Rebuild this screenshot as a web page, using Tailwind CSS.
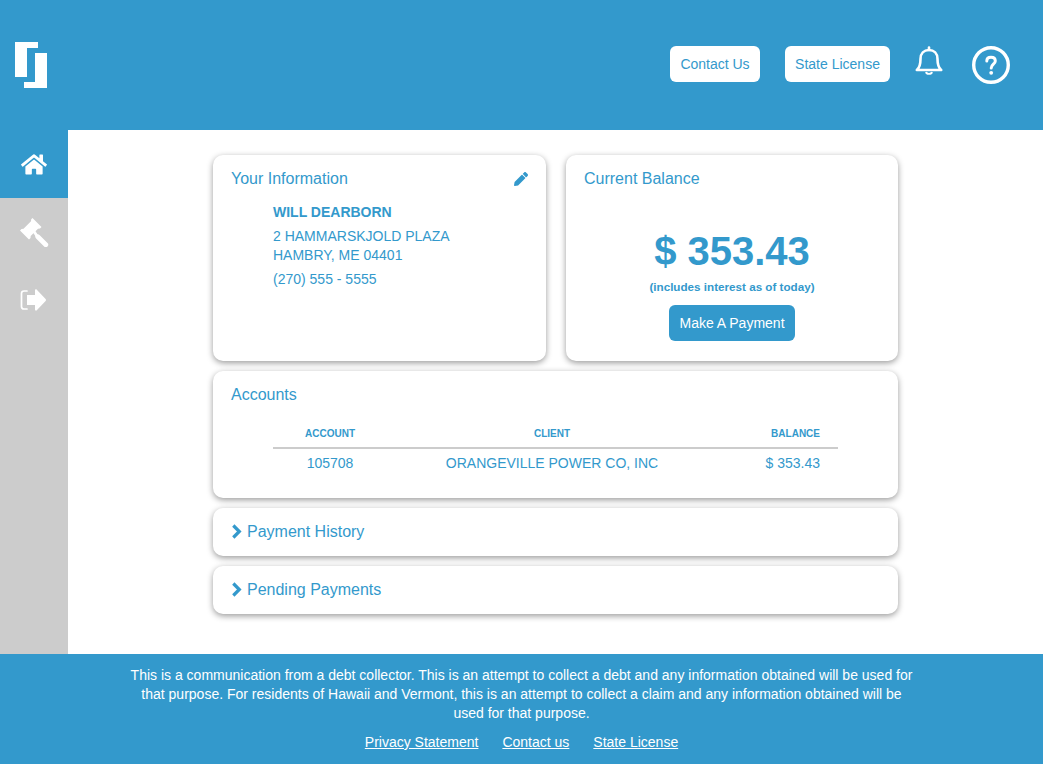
<!DOCTYPE html>
<html lang="en">
<head>
    <meta charset="UTF-8">
    <meta name="viewport" content="width=device-width, initial-scale=1.0">
    <title>Account Overview</title>
    <script src="https://cdn.jsdelivr.net/npm/@tailwindcss/browser@4"></script>
</head>
<body class="bg-white font-['Liberation_Sans',Arial,sans-serif] text-[14px] text-[#3399cc] h-[764px] overflow-hidden flex flex-col">

    <!-- Header -->
    <header class="h-[130px] shrink-0 bg-[#3399cc] flex items-center justify-between pl-[15px] pr-[33px]">
        <svg class="w-[32px] h-[46px]" viewBox="0 0 32 46" fill="#fff">
            <path d="M0 0H23V6H12V35H0Z"></path>
            <path d="M20 11H32V46H9V40H20Z"></path>
        </svg>
        <div class="flex items-center">
            <a class="h-[36px] w-[90px] mb-[2px] bg-white rounded-[6px] flex items-center justify-center">Contact Us</a>
            <a class="h-[36px] w-[105px] mb-[2px] ml-[25px] bg-white rounded-[6px] flex items-center justify-center">State License</a>
            <svg class="w-[28px] h-[30px] ml-[25px] mb-[9px]" viewBox="0 0 28 30" fill="none" stroke="#fff" stroke-width="2.6" stroke-linejoin="round">
                <path d="M1.800 24C5 21.500 5.500 18 5.500 13C5.500 7.500 9 4 14 4C19 4 22.500 7.500 22.500 13C22.500 18 23 21.500 26.200 24Z"></path>
                <path d="M14 1.500V4" stroke-linecap="round"></path>
                <path d="M11 26C11.500 28.500 16.500 28.500 17 26" stroke-width="1.800"></path>
            </svg>
            <svg class="w-[38px] h-[38px] ml-[29px]" viewBox="0 0 38 38" fill="none" stroke="#fff">
                <circle cx="19" cy="19" r="17.300" stroke-width="3.400"></circle>
                <path d="M14.800 15C14.800 12.500 16.600 11.200 19 11.200C21.600 11.200 23.300 12.700 23.300 14.900C23.300 18 19.200 18.300 19.200 22" stroke-width="3" stroke-linecap="round"></path>
                <circle cx="19.200" cy="26.800" r="1.900" fill="#fff" stroke="none"></circle>
            </svg>
        </div>
    </header>

    <div class="flex flex-1 min-h-0">
        <!-- Sidebar -->
        <nav class="w-[68px] shrink-0 bg-[#cccccc] flex flex-col">
            <div class="h-[68px] bg-[#3399cc] flex items-center justify-center">
                <svg class="w-[26px] h-[23px]" viewBox="0 0 576 512" fill="#fff"><path d="M280.37 148.26L96 300.11V464a16 16 0 0 0 16 16l112.06-.29a16 16 0 0 0 15.92-16V368a16 16 0 0 1 16-16h64a16 16 0 0 1 16 16v95.64a16 16 0 0 0 16 16.05L464 480a16 16 0 0 0 16-16V300L295.67 148.26a12.19 12.19 0 0 0-15.3 0zM571.6 251.47L488 182.56V44.05a12 12 0 0 0-12-12h-56a12 12 0 0 0-12 12v72.61L318.47 43a48 48 0 0 0-61 0L4.34 251.47a12 12 0 0 0-1.6 16.9l25.5 31A12 12 0 0 0 45.15 301l235.22-193.74a12.19 12.19 0 0 1 15.3 0L530.9 301a12 12 0 0 0 16.9-1.6l25.5-31a12 12 0 0 0-1.7-16.93z"></path></svg>
            </div>
            <div class="h-[68px] flex items-center justify-center">
                <!-- gavel -->
                <svg class="w-[30px] h-[30px]" viewBox="19 217 30 30" fill="#fff">
                    <path d="M20 230.500L21.500 229L23.500 228.800L31 221.300L31.200 219.300L32.500 218L41.500 227L40 228.500L38 228.700L30.700 236L30.500 238L29 239.500Z"></path>
                    <path d="M37.800 236.800L45.800 244.800" stroke="#fff" stroke-width="4.800" stroke-linecap="round" fill="none"></path>
                    <path d="M33 232.500L35 230.500L38 235L36 237Z"></path>
                </svg>
            </div>
            <div class="h-[68px] flex items-center justify-center">
                <!-- sign out -->
                <svg class="w-[28px] h-[24px]" viewBox="20 288 28 24" fill="#fff">
                    <path d="M27 291H24C22.500 291 21.500 292 21.500 293.500V306.500C21.500 308 22.500 309 24 309H27" fill="none" stroke="#fff" stroke-width="1.700" stroke-linecap="round"></path>
                    <path d="M27 295H35V290.500C35 289.500 36 289 36.800 289.700L45.600 299C46.100 299.600 46.100 300.400 45.600 301L36.800 310.300C36 311 35 310.500 35 309.500V305H27Z"></path>
                </svg>
            </div>
        </nav>

        <!-- Main -->
        <main class="flex-1 pt-[25px] pl-[145px]">
            <div class="w-[685px] flex flex-col gap-[10px]">
                <div class="flex gap-[20px]">
                    <section class="w-[333px] h-[206px] bg-white rounded-[10px] shadow-[0_2px_6px_rgba(0,0,0,0.4)] px-[18px] pt-[15px]">
                        <div class="flex justify-between items-center">
                            <h2 class="text-[16px] leading-[18px]">Your Information</h2>
                            <svg class="w-[14px] h-[14px] mb-[1px]" viewBox="0 0 512 512" fill="#3399cc"><path d="M497.900 142.100l-46.100 46.100c-4.700 4.700-12.300 4.700-17 0l-111-111c-4.700-4.700-4.700-12.300 0-17l46.100-46.100c18.700-18.700 49.100-18.700 67.900 0l60.100 60.100c18.800 18.700 18.800 49.100 0 67.900zM284.200 99.800L21.600 362.400.4 483.900c-2.900 16.400 11.400 30.600 27.800 27.800l121.500-21.300 262.600-262.600c4.200-4.200 4.200-11 0-15.200l-112.900-112.900c-4.300-4.100-11.100-4.100-15.200.1z"></path></svg>
                        </div>
                        <div class="pl-[42px] mt-[15px] leading-[19px]">
                            <p class="font-bold">WILL DEARBORN</p>
                            <p class="mt-[5px]">2 HAMMARSKJOLD PLAZA</p>
                            <p>HAMBRY, ME 04401</p>
                            <p class="mt-[5px]">(270) 555 - 5555</p>
                        </div>
                    </section>
                    <section class="w-[332px] h-[206px] bg-white rounded-[10px] shadow-[0_2px_6px_rgba(0,0,0,0.4)] px-[18px] pt-[15px]">
                        <h2 class="text-[16px] leading-[18px]">Current Balance</h2>
                        <div class="flex flex-col items-center">
                            <p class="mt-[40px] text-[40px] leading-[46px] font-bold">$ 353.43</p>
                            <p class="mt-[6px] text-[11.670px] leading-[14px] font-bold">(includes interest as of today)</p>
                            <button class="mt-[11px] w-[126px] h-[36px] bg-[#3399cc] text-white rounded-[6px]">Make A Payment</button>
                        </div>
                    </section>
                </div>

                <section class="h-[127px] bg-white rounded-[10px] shadow-[0_2px_6px_rgba(0,0,0,0.4)] px-[18px] pt-[15px]">
                    <h2 class="text-[16px] leading-[18px]">Accounts</h2>
                    <table class="ml-[42px] mt-[20px] w-[565px] table-fixed">
                        <thead>
                            <tr class="border-b-2 border-[#cccccc] text-[10px] font-bold">
                                <th class="w-[114px] h-[24px] pb-[4px] text-center">ACCOUNT</th>
                                <th class="pb-[4px] text-center">CLIENT</th>
                                <th class="w-[121px] pb-[4px] pr-[18px] text-right">BALANCE</th>
                            </tr>
                        </thead>
                        <tbody>
                            <tr>
                                <td class="h-[29px] text-center">105708</td>
                                <td class="text-center">ORANGEVILLE POWER CO, INC</td>
                                <td class="pr-[18px] text-right">$ 353.43</td>
                            </tr>
                        </tbody>
                    </table>
                </section>

                <section class="h-[48px] bg-white rounded-[10px] shadow-[0_2px_6px_rgba(0,0,0,0.4)] px-[18px] flex items-center">
                    <svg class="w-[11px] h-[15px] mb-[1px]" viewBox="0 0 11 15" fill="none" stroke="#3399cc" stroke-width="3.200"><path d="M2.300 1.500L8.300 7.500L2.300 13.500"></path></svg>
                    <h2 class="ml-[5px] text-[16px]">Payment History</h2>
                </section>
                <section class="h-[48px] bg-white rounded-[10px] shadow-[0_2px_6px_rgba(0,0,0,0.4)] px-[18px] flex items-center">
                    <svg class="w-[11px] h-[15px] mb-[1px]" viewBox="0 0 11 15" fill="none" stroke="#3399cc" stroke-width="3.200"><path d="M2.300 1.500L8.300 7.500L2.300 13.500"></path></svg>
                    <h2 class="ml-[5px] text-[16px]">Pending Payments</h2>
                </section>
            </div>
        </main>
    </div>

    <!-- Footer -->
    <footer class="h-[110px] shrink-0 bg-[#3399cc] text-white text-center pt-[12px]">
        <p class="w-[790px] mx-auto leading-[19px]">This is a communication from a debt collector. This is an attempt to collect a debt and any information obtained will be used for that purpose. For residents of Hawaii and Vermont, this is an attempt to collect a claim and any information obtained will be used for that purpose.</p>
        <div class="mt-[9px] flex justify-center gap-[24px] leading-[20px]">
            <a class="underline">Privacy Statement</a>
            <a class="underline">Contact us</a>
            <a class="underline">State License</a>
        </div>
    </footer>
</body>
</html>
